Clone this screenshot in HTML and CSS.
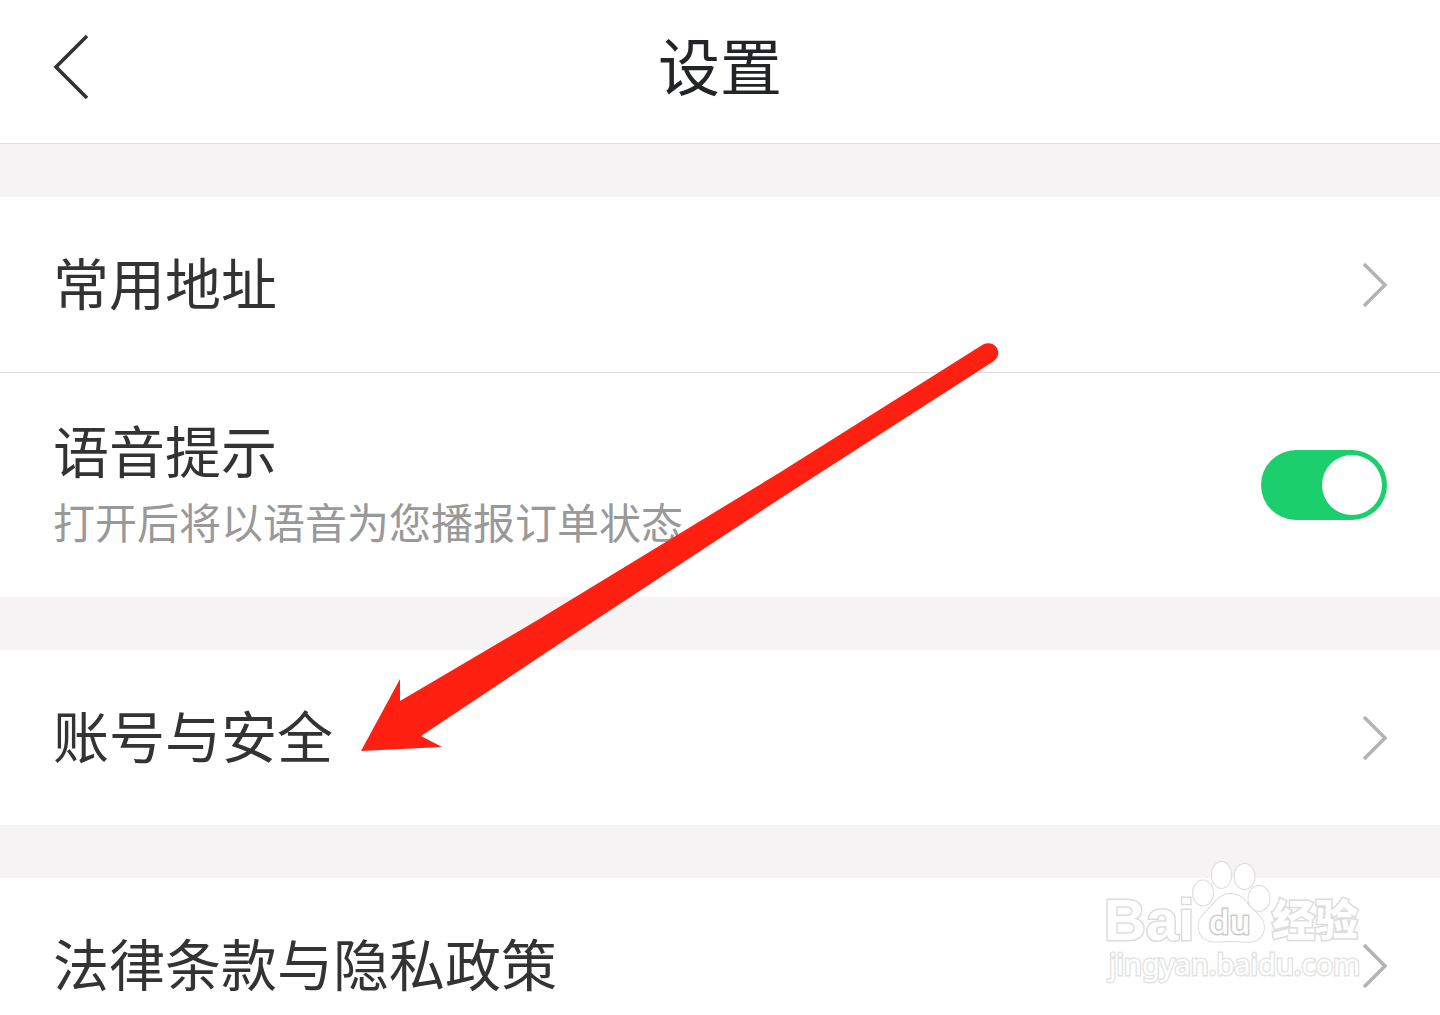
FILE: index.html
```html
<!DOCTYPE html>
<html lang="zh-CN">
<head>
<meta charset="utf-8">
<meta name="viewport" content="width=device-width, initial-scale=1">
<title>设置</title>
<link rel="stylesheet" href="styles.css">
</head>
<body>
<div class="page">
  <header class="header">
    <button class="back" type="button" aria-label="返回">
      <svg width="38" height="66" viewBox="0 0 38 66"><path d="M34 2 3 33 34 64" fill="none" stroke="#333" stroke-width="3.600"/></svg>
    </button>
    <h1 class="title">设置</h1>
  </header>

  <main class="groups">
    <section class="group">
      <a class="row" href="#address">
        <span class="label">常用地址</span>
        <svg class="chevron" viewBox="0 0 26 46"><path d="M3 2 24 23 3 44"/></svg>
      </a>
      <div class="row row-detail">
        <label class="text" for="voice">
          <span class="label">语音提示</span>
          <span class="hint">打开后将以语音为您播报订单状态</span>
        </label>
        <input class="switch" id="voice" type="checkbox" role="switch" checked>
      </div>
    </section>

    <section class="group">
      <a class="row" href="#account">
        <span class="label">账号与安全</span>
        <svg class="chevron" viewBox="0 0 26 46"><path d="M3 2 24 23 3 44"/></svg>
      </a>
    </section>

    <section class="group group-last">
      <a class="row" href="#legal">
        <span class="label">法律条款与隐私政策</span>
        <svg class="chevron" viewBox="0 0 26 46"><path d="M3 2 24 23 3 44"/></svg>
      </a>
    </section>
  </main>

  <svg class="arrow" viewBox="0 0 640 412" aria-hidden="true">
    <path d="M0 410 39 338V360L180 277 418 132 622 3.500C634-2 643 12 633 20L420 157 210 295 60 395 81 406Z" fill="#ff2012"/>
  </svg>

  <svg class="watermark" viewBox="0 0 270 130" role="img" aria-label="Baidu 经验">
    <g class="mark">
      <ellipse cx="109" cy="32" rx="10" ry="12.500"/>
      <ellipse cx="127.500" cy="14" rx="9.500" ry="13"/>
      <ellipse cx="150.500" cy="15.500" rx="10" ry="12.500"/>
      <ellipse cx="165" cy="37.500" rx="10.500" ry="12.500"/>
      <path d="M137 33C124 33 121 43 114 49C106 56 102 63 106 72C112 84 125 80 137 80C149 80 163 85 169 72C172 63 168 56 159 49C152 43 149 33 137 33Z"/>
    </g>
    <text class="brand" x="10" y="79">Bai</text>
    <text class="brand-du" x="115" y="73">du</text>
    <text class="brand-cn" x="178" y="75">经验</text>
    <text class="site" x="15" y="114">jingyan.baidu.com</text>
  </svg>
</div>
</body>
</html>
```
FILE: styles.css
```css
* {
  box-sizing: border-box;
}

body {
  margin: 0;
  background: #f5f3f4;
  color: #333;
  font-family: "Noto Sans CJK SC", "Noto Sans", sans-serif;
}

.page {
  position: relative;
  overflow: hidden;
}

.header {
  display: grid;
  grid-template-columns: 1fr auto 1fr;
  align-items: center;
  padding: 24px 53px 39px;
  background: #fff;
  border-bottom: 1px solid #dedede;
}

.back {
  display: flex;
  justify-self: start;
  padding: 6px 0 0;
  border: 0;
  background: none;
}

.title {
  margin: 0;
  color: #222428;
  font-size: 62px;
  font-weight: 400;
  line-height: 80px;
}

.groups {
  display: flex;
  flex-direction: column;
  gap: 53px;
  padding-top: 53px;
}

.group {
  background: #fff;
}

.row {
  display: flex;
  align-items: center;
  justify-content: space-between;
  padding: 48px 53px 47px;
  color: inherit;
  text-decoration: none;
}

.row + .row {
  border-top: 1px solid #dedede;
}

.row-detail {
  padding-top: 40px;
  padding-bottom: 40px;
}

.group-last .row {
  padding-bottom: 9px;
}

.text {
  display: flex;
  flex-direction: column;
}

.label {
  padding-bottom: 8px;
  font-size: 56px;
  line-height: 72px;
}

.hint {
  padding-bottom: 8px;
  color: #999;
  font-size: 42px;
  line-height: 56px;
}

.chevron {
  width: 26px;
  height: 46px;
  fill: none;
  stroke: #b3b3b3;
  stroke-width: 3.5;
}

.switch {
  appearance: none;
  display: flex;
  width: 126px;
  height: 70px;
  margin: 0;
  padding: 5px;
  justify-content: flex-end;
  border-radius: 35px;
  background: #1bcf6c;
}

.switch::before {
  content: "";
  width: 60px;
  height: 60px;
  border-radius: 50%;
  background: #fff;
}

.switch:not(:checked) {
  justify-content: flex-start;
  background: #ccc;
}

.arrow {
  position: absolute;
  top: 341px;
  left: 361px;
  width: 640px;
  height: 412px;
  pointer-events: none;
}

.watermark {
  position: absolute;
  right: 76px;
  bottom: 24px;
  width: 270px;
  height: 130px;
  overflow: visible;
  fill: #fff;
  stroke: #dcdcdc;
  stroke-width: 3;
  paint-order: stroke;
  pointer-events: none;
}

.mark {
  stroke-width: 2;
}

.brand {
  font: 700 58px "Liberation Sans", sans-serif;
}

.brand-du {
  font: 600 33px "Open Sans", sans-serif;
  stroke: #ccc;
}

.brand-cn {
  font: 900 43px "Noto Sans CJK SC", sans-serif;
}

.site {
  font: 400 29px "Noto Sans", sans-serif;
  stroke: #e4e4e4;
}
```
